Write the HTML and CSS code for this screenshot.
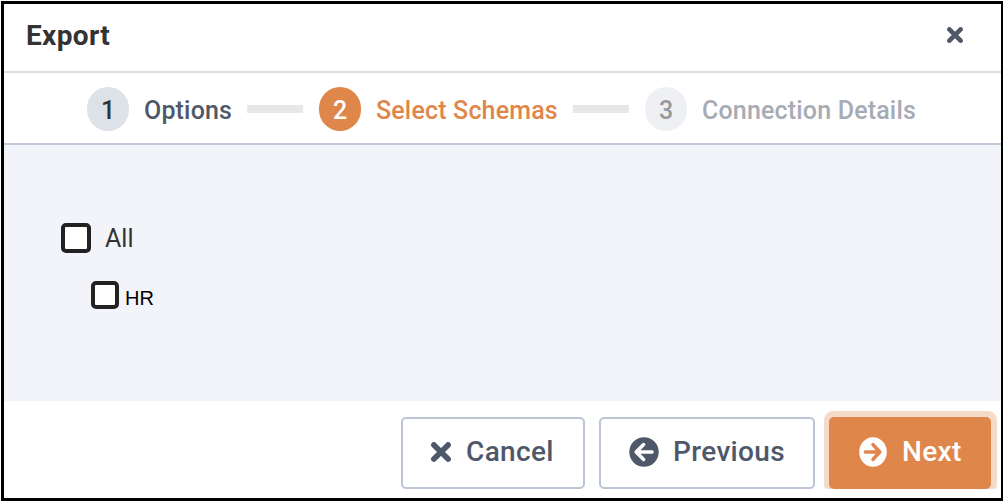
FILE: index.html
```html
<!DOCTYPE html>
<html lang="en">
<head>
<meta charset="utf-8">
<title>Export</title>
<link rel="stylesheet" href="styles.css">
</head>
<body>
<div class="dialog">
  <header class="header">
    <h1 class="title">Export</h1>
    <svg class="close" viewBox="0 0 16 16"><path d="M2.4 2.4 13.6 13.6M13.6 2.4 2.4 13.6"/></svg>
  </header>
  <nav class="steps">
    <div class="badge badge-done">1</div>
    <div class="label label-options">Options</div>
    <div class="bar"></div>
    <div class="badge badge-current">2</div>
    <div class="label label-schemas">Select Schemas</div>
    <div class="bar"></div>
    <div class="badge badge-next">3</div>
    <div class="label label-details">Connection Details</div>
  </nav>
  <main class="body">
    <label class="option"><span class="box"></span><span class="all">All</span></label>
    <label class="option child"><span class="box box-small"></span><span class="hr">HR</span></label>
  </main>
  <footer class="footer">
    <div class="button cancel">
      <svg class="icon-x" viewBox="0 0 20 20"><path d="M2.9 2.9 17.1 17.1M17.1 2.9 2.9 17.1"/></svg>
      <span>Cancel</span>
    </div>
    <div class="button previous">
      <svg class="icon-arrow" viewBox="0 0 30 30"><circle cx="15" cy="15" r="14.7"/><path d="M23 15H8M14.6 7.6 7.2 15l7.4 7.4"/></svg>
      <span>Previous</span>
    </div>
    <div class="halo">
      <div class="button next">
        <svg class="icon-arrow icon-next" viewBox="0 0 28 30" preserveAspectRatio="none"><ellipse cx="14" cy="15" rx="13.8" ry="14.7"/><path d="M6.4 15H20M14 7.6 20.8 15 14 22.4"/></svg>
        <span>Next</span>
      </div>
    </div>
  </footer>
</div>
</body>
</html>
```
FILE: styles.css
```css
* { box-sizing: border-box; }
body { margin: 0; background: #fff; font-family: Roboto, "Liberation Sans", sans-serif; overflow: hidden; }
.dialog { width: 1002px; height: 500px; margin: 1px 0 0 1px; border: 3px solid #000; border-right-width: 2px; display: flex; flex-direction: column; background: #fff; }
.header { height: 69px; border-bottom: 2px solid #dcdddd; display: flex; align-items: center; justify-content: space-between; padding: 0 38px 5px 22px; }
.title { margin: 0; padding-top: 2px; font-size: 28px; line-height: 34px; font-weight: 700; color: #333; letter-spacing: 0.35px; }
.close { width: 16px; height: 16px; stroke: #4f5869; stroke-width: 4.6; stroke-linecap: round; }
.steps { height: 72px; border-bottom: 2px solid #c1c8d9; display: flex; align-items: center; padding: 2px 0 0 83px; font-size: 25px; font-weight: 500; white-space: nowrap; }
.badge { width: 42px; height: 44px; border-radius: 22px; display: flex; align-items: center; justify-content: center; padding-top: 3px; margin-right: 15px; }
.badge-done { background: #dde1e8; color: #333; }
.badge-current { background: #df864a; color: #fff; }
.badge-next { background: #eff0f4; color: #999; }
.label { line-height: 30px; padding-top: 4px; letter-spacing: 0.17px; }
.label-options { width: 87px; color: #4f5869; }
.label-schemas { width: 181px; color: #df864a; }
.label-details { color: #a7abb4; }
.bar { width: 56px; height: 8px; background: #e7e7e7; margin: 0 16px; }
.body { height: 256px; background: #f3f4f9; padding: 78px 0 0 57px; }
.option { display: flex; height: 30px; align-items: center; }
.box { width: 30px; height: 30px; border: 4px solid #222; border-radius: 5px; background: #fff; margin-right: 14px; }
.box-small { width: 28px; height: 28px; margin-right: 6px; }
.all { font-size: 25px; color: #333; }
.child { margin: 27px 0 0 30px; }
.hr { font: 20px/24px "Liberation Sans", Arial, sans-serif; color: #000; padding-top: 6px; }
.footer { height: 97px; display: flex; align-items: flex-start; padding-left: 397px; font-size: 28px; font-weight: 500; color: #4f5869; letter-spacing: 0.35px; }
.button { height: 72px; margin-top: 16px; border: 2px solid #bcc5d6; border-radius: 5px; display: flex; align-items: center; white-space: nowrap; padding-bottom: 2px; }
.button span { line-height: 34px; }
.cancel { width: 184px; padding-left: 28px; margin-right: 14px; }
.previous { width: 216px; padding-left: 28px; margin-right: 9px; }
.halo { width: 173px; height: 78px; margin-top: 10px; padding: 6px 6px 0 5px; background: #f5dac8; border-radius: 9px 9px 4px 4px; }
.next { width: 162px; margin-top: 0; border: 0; background: #df864a; color: #fff; padding-left: 30px; }
.icon-x { width: 20px; height: 20px; stroke: #4f5869; stroke-width: 5.6; stroke-linecap: round; margin-right: 15px; }
.icon-arrow { width: 30px; height: 30px; fill: #4f5869; margin-right: 14px; }
.icon-arrow path { fill: none; stroke: #fff; stroke-width: 3.6; stroke-linecap: round; stroke-linejoin: round; }
.icon-next { width: 28px; fill: #fff; margin-right: 15px; }
.icon-next path { stroke: #df864a; }
```
